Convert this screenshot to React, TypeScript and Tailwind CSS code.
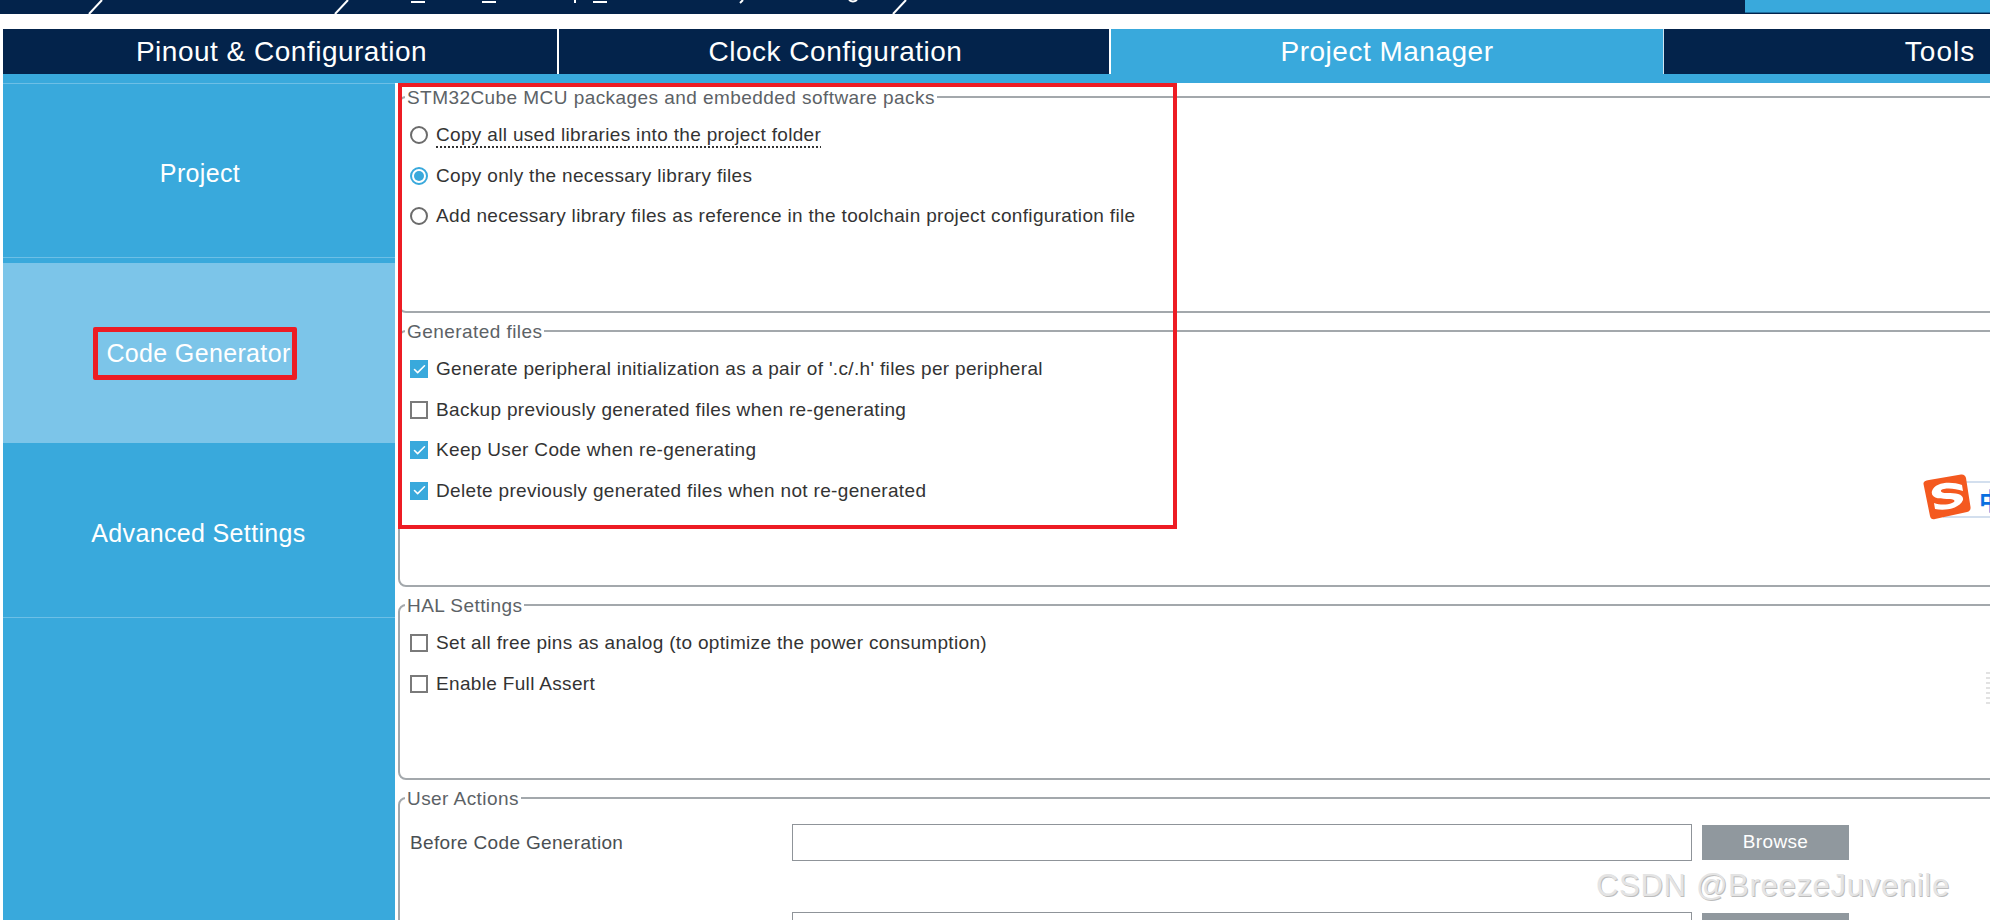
import React from 'react';
import { Check } from 'lucide-react';

const Radio = ({ on }: { on?: boolean }) => (
  <span className={`flex h-[18px] w-[18px] shrink-0 items-center justify-center rounded-full border-2 ${on ? 'border-[#39a9dc]' : 'border-[#6b6b6b]'}`}>
    {on && <span className="h-[10px] w-[10px] rounded-full bg-[#39a9dc]" />}
  </span>
);

const Box = ({ on }: { on?: boolean }) => (
  <span className={`flex h-[18px] w-[18px] shrink-0 items-center justify-center ${on ? 'bg-[#39a9dc]' : 'border-2 border-[#7a7a7a] bg-white'}`}>
    {on && <Check size={15} strokeWidth={2.5} className="text-white" />}
  </span>
);

const Row = ({ control, label, dotted }: { control: React.ReactNode; label: string; dotted?: boolean }) => (
  <div className="flex h-[40.5px] items-center gap-2 pl-[10px]">
    {control}
    <span className={`text-[19px] leading-[22px] tracking-[0.33px] text-[#333333] ${dotted ? 'underline decoration-dotted decoration-2 underline-offset-[5px]' : ''}`}>{label}</span>
  </div>
);

const Group = ({ title, className, children }: { title: string; className: string; children: React.ReactNode }) => (
  <div className={`relative w-[1700px] shrink-0 rounded-[8px] border-2 border-[#a3a8ac] ${className}`}>
    <span className="absolute left-[5px] top-[-10px] bg-white px-[2px] text-[19px] leading-[20px] tracking-[0.44px] text-[#5c6266]">{title}</span>
    {children}
  </div>
);

const ActionRow = ({ label, browse }: { label?: string; browse?: boolean }) => (
  <div className="mb-[51px] flex items-center pl-[10px]">
    <span className="w-[382px] shrink-0 pt-[2px] text-[19px] tracking-[0.33px] text-[#4a4f53]">{label}</span>
    <div className="h-[37px] w-[900px] shrink-0 border border-[#8f9499] bg-white" />
    <button className="ml-[10px] h-[35px] w-[147px] shrink-0 bg-[#90989e] text-[19px] tracking-[0.33px] text-white">{browse && 'Browse'}</button>
  </div>
);

const TopMarks = () => (
  <svg className="absolute left-0 top-0" width="1000" height="14" viewBox="0 0 1000 14">
    <g stroke="#ffffff" strokeWidth="2" fill="none">
      <path d="M89 14 L102 0" />
      <path d="M335 14 L348 0" />
      <path d="M893 14 L906 0" />
      <path d="M411 2 H425" />
      <path d="M482 2 H496" />
      <path d="M593 2 H607" />
      <path d="M575 0 V3" />
      <path d="M743 0 L740 3" />
      <path d="M849 0 Q853 3 857 0" />
    </g>
  </svg>
);

const SogouIcon = () => (
  <div className="absolute left-[1923px] top-[474px] h-[46px] w-[67px]">
    <div className="absolute left-[20px] top-[7px] flex h-[37px] w-[60px] items-center border-2 border-[#d3dfee] bg-white pl-[34px] text-[24px] font-bold text-[#0a6fe0] [font-family:'Noto_Sans_CJK_SC',sans-serif]">中</div>
    <svg className="absolute left-0 top-0" width="48" height="46" viewBox="0 0 48 46">
      <path d="M6 6 L38 0.5 Q42 0 43 4 L47.5 33 Q48 37 44 38 L12 45 Q8 46 7 42 L0.5 10 Q0 7 6 6 Z" fill="#f4591f" />
      <path d="M39 11 C28 7 12 8 9 17 C7 25 18 25 27 25 C32 25 33 28 29 29 C24 31 17 31 11 29 L12 35 C22 37 36 35 40 26 C41 20 33 19 24 19 C17 19 16 16 21 15 C27 14 33 15 40 17 Z" fill="#ffffff" />
    </svg>
  </div>
);

export default function App() {
  return (
    <div className="relative flex h-[920px] w-[1990px] flex-col overflow-hidden bg-white [font-family:'Liberation_Sans',Arial,sans-serif]">
      {/* breadcrumb bar, cut off by the screenshot */}
      <div className="relative flex h-[14px] shrink-0 justify-end bg-[#03234b]">
        <TopMarks />
        <div className="h-[13px] w-[245px] border-b border-[#1f6f9f] bg-[#39a9dc]" />
      </div>

      {/* main tabs */}
      <div className="ml-[3px] mt-[15px] flex h-[45px] shrink-0 text-[28px] tracking-[0.5px] text-white">
        <div className="flex w-[556px] shrink-0 items-center justify-center border-r-2 border-white bg-[#03234b] pl-[3px] pt-[1px]">Pinout &amp; Configuration</div>
        <div className="flex w-[552px] shrink-0 items-center justify-center border-r-2 border-white bg-[#03234b] pl-[3px] pt-[1px]">Clock Configuration</div>
        <div className="flex w-[553px] shrink-0 items-center justify-center border-r border-[#cfe6f3] bg-[#39a9dc] pt-[1px]">Project Manager</div>
        <div className="flex w-[552px] shrink-0 items-center justify-center bg-[#03234b] pt-[1px] tracking-[1px]">Tools</div>
      </div>
      <div className="ml-[3px] h-[9px] shrink-0 bg-[#39a9dc]" />

      <div className="ml-[3px] flex min-h-0 flex-1">
        {/* side menu */}
        <div className="flex w-[392px] shrink-0 flex-col bg-[#39a9dc] text-[25px] tracking-[0.35px] text-white">
          <div className="flex h-[175px] items-center justify-center border-y border-[#6dbfe6] pl-[2px] pt-[7px]">Project</div>
          <div className="h-[5px]" />
          <div className="flex h-[180px] items-center justify-center bg-[#7cc5e9] pr-[1px] pt-[2px]">Code Generator</div>
          <div className="flex h-[175px] items-center justify-center border-b border-[#6dbfe6] pr-[1px] pt-[7px]">Advanced Settings</div>
        </div>

        {/* settings */}
        <div className="flex min-w-0 flex-1 flex-col gap-[17px] overflow-hidden pl-[3px] pt-[13px]">
          <Group title="STM32Cube MCU packages and embedded software packs" className="h-[217px] pt-[17px]">
            <Row dotted control={<Radio />} label="Copy all used libraries into the project folder" />
            <Row control={<Radio on />} label="Copy only the necessary library files" />
            <Row control={<Radio />} label="Add necessary library files as reference in the toolchain project configuration file" />
          </Group>
          <Group title="Generated files" className="h-[257px] pt-[17px]">
            <Row control={<Box on />} label="Generate peripheral initialization as a pair of '.c/.h' files per peripheral" />
            <Row control={<Box />} label="Backup previously generated files when re-generating" />
            <Row control={<Box on />} label="Keep User Code when re-generating" />
            <Row control={<Box on />} label="Delete previously generated files when not re-generated" />
          </Group>
          <Group title="HAL Settings" className="h-[176px] pt-[17px]">
            <Row control={<Box />} label="Set all free pins as analog (to optimize the power consumption)" />
            <Row control={<Box />} label="Enable Full Assert" />
          </Group>
          <Group title="User Actions" className="h-[300px] pt-[25px]">
            <ActionRow label="Before Code Generation" browse />
            <ActionRow />
          </Group>
        </div>
      </div>

      {/* red annotation boxes drawn on top of the screenshot */}
      <div className="absolute left-[398px] top-[83px] h-[446px] w-[779px] border-[4px] border-[#ed1c24]" />
      <div className="absolute left-[93px] top-[327px] h-[53px] w-[204px] rounded-[2px] border-[5px] border-[#ed1c24]" />

      <SogouIcon />
      <div className="absolute left-[1986px] top-[672px] h-[32px] w-[4px] bg-[repeating-linear-gradient(0deg,#e2e2e2_0,#e2e2e2_2px,transparent_2px,transparent_5px)]" />

      <div className="absolute left-[1596px] top-[868px] whitespace-nowrap text-[31px] leading-[36px] tracking-[0.7px] text-[#e4e4e4] [text-shadow:1px_1px_0_#bdbdbd]">CSDN @BreezeJuvenile</div>
    </div>
  );
}
